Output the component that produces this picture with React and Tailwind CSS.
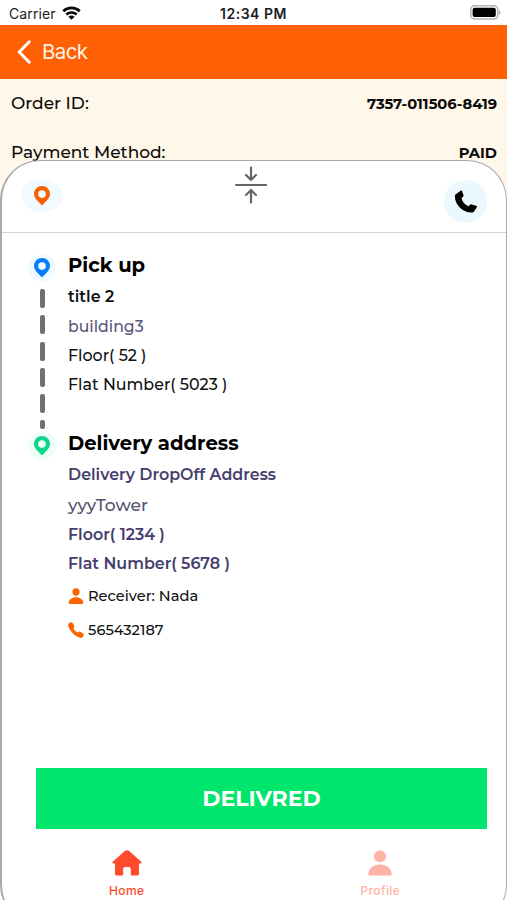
import React from "react";
import { IoCall, IoPerson } from "react-icons/io5";

function Pin({ className }) {
  return (
    <svg viewBox="0 0 16 20" className={`h-5 w-4 ${className}`} fill="currentColor">
      <path
        fillRule="evenodd"
        d="M8 0C3.5 0 0 3.4 0 7.8c0 3 1.700 5.300 3.600 7.300L8 19.600l4.400-4.500c1.900-2 3.600-4.300 3.600-7.300C16 3.400 12.500 0 8 0Zm0 4.300a3.800 3.800 0 1 1 0 7.600 3.800 3.800 0 0 1 0-7.600Z"
      />
    </svg>
  );
}

function StatusBar() {
  return (
    <div className="grid h-[25px] grid-cols-3 items-center bg-white pt-[2px] font-['Inter','Liberation_Sans',sans-serif] text-[14px] text-[#1c1c1e]">
      <div className="flex items-center gap-[6px] pl-[9px]">
        <span className="tracking-[0.1px]">Carrier</span>
        <svg viewBox="0 0 19 14" className="mb-[2px] h-[14px] w-[19px]" fill="none" stroke="#0b0b0b">
          <path d="M1.300 5.200a11.800 11.800 0 0 1 16.400 0" strokeWidth="2.800" />
          <path d="M4.300 8.500a7.500 7.500 0 0 1 10.400 0" strokeWidth="2.500" />
          <path d="M9.500 13.800 6.400 10.800a4.300 4.300 0 0 1 6.200 0Z" fill="#0b0b0b" stroke="none" />
        </svg>
      </div>
      <div className="text-center font-semibold tracking-[0.5px] whitespace-nowrap">12:34 PM</div>
      <div className="flex justify-end pr-[6px]">
        <svg viewBox="0 0 31 15" className="mb-[2px] h-[15px] w-[31px]">
          <rect x="0.8" y="0.8" width="27" height="13.2" rx="4" fill="#fff" stroke="#b5b5b5" strokeWidth="1.6" />
          <rect x="2.600" y="2.800" width="23.200" height="9.200" rx="2" fill="#000" />
          <path d="M29 5.200c1 .4 1.600 1.200 1.600 2.300S30 9.300 29 9.700Z" fill="#b5b5b5" />
        </svg>
      </div>
    </div>
  );
}

function CollapseIcon() {
  return (
    <svg
      viewBox="0 0 32 38"
      className="h-[38px] w-8"
      fill="none"
      stroke="#666"
      strokeWidth="2.200"
      strokeLinecap="round"
      strokeLinejoin="round"
    >
      <path d="M1.100 19h30M16 1.500v12M11 9l5 5 5-5M16 36.500v-12M11 29l5-5 5 5" />
    </svg>
  );
}

function Handset() {
  return (
    <svg viewBox="0 0 24 24" className="size-6" fill="#000">
      <path d="M6.600.8c.5-.4 1-.3 1.400.2l1.600 4.200c.2.600.1 1-.4 1.400L7.600 8.200c.8 3.700 3.500 6.700 7 8.100l1.500-1.600c.4-.4.9-.5 1.400-.3l4.900 1.400c.6.2.8.7.5 1.300l-2.600 4.200c-.4.700-1 1.100-1.800 1.200C9 23.300.5 14.600.9 6c0-.7.3-1.300.9-1.700Z" />
    </svg>
  );
}

const DASHES = ["h-[19px]", "h-[19px]", "h-[19px]", "h-[19px]", "h-[19px]", "h-[9px]"];

function Route() {
  return (
    <div className="flex w-[28px] flex-col items-center">
      <div className="flex size-7 items-center justify-center rounded-full bg-[#f0fbff]">
        <Pin className="text-[#0a7cff]" />
      </div>
      <div className="mt-[7px] flex flex-col items-center gap-[7.300px]">
        {DASHES.map((h, i) => (
          <span key={i} className={`${h} w-[5px] rounded-[2px] bg-[#707070]`} />
        ))}
      </div>
      <div className="mt-[3px] flex size-7 items-center justify-center rounded-full bg-[#effdf8]">
        <Pin className="text-[#0dd68b]" />
      </div>
    </div>
  );
}

export default function App() {
  return (
    <div className="h-[900px] w-[507px] overflow-hidden bg-white font-['Montserrat','Inter','Liberation_Sans',sans-serif] text-[#0a0a0a]">
      <StatusBar />
      <header className="flex h-[54px] items-center gap-[11px] bg-[#ff6003] pl-[17px] text-[#fff1e2]">
        <svg viewBox="0 0 14 24" className="h-6 w-[14px]" fill="none" stroke="#fff" strokeWidth="3">
          <path d="M12.300 1.800 2.200 12l10.100 10.200" strokeLinecap="round" strokeLinejoin="round" />
        </svg>
        <span className="pt-px font-['Inter','Liberation_Sans',sans-serif] text-[20.500px] tracking-[-0.600px]">Back</span>
      </header>
      <section className="h-[131px] bg-[#fff7e9] pr-[10px] pl-[11px] text-[17px] font-medium">
        <div className="flex h-[49px] items-center justify-between">
          <span>Order ID:</span>
          <span className="pt-px text-[14.700px] font-bold">7357-011506-8419</span>
        </div>
        <div className="flex h-[49px] items-center justify-between">
          <span>Payment Method:</span>
          <span className="pt-px text-[14.700px] font-bold">PAID</span>
        </div>
      </section>

      <main className="relative -mt-[50px] h-[765px] rounded-[40px] border border-l-2 border-[#a9a9a9] bg-white">
        <div className="flex h-[72px] justify-between border-b border-[#d3d3d3] pr-[19px] pl-[19px]">
          <div className="mt-[18px] flex h-[33px] w-[42px] items-center justify-center rounded-[50%] bg-[#f0faff]">
            <Pin className="text-[#f56200]" />
          </div>
          <div className="mt-[5px] -ml-[6px]">
            <CollapseIcon />
          </div>
          <div className="mt-[19px] flex size-[43px] items-center justify-center rounded-full bg-[#ebf9fe]">
            <Handset />
          </div>
        </div>

        <div className="flex h-[535px] gap-3 pt-[21px] pl-[26px]">
          <Route />
          <div className="flex flex-col items-start text-[15.900px] leading-[30px] font-medium whitespace-nowrap text-[#111]">
            <h2 className="mt-[-4px] h-[32px] text-[19.600px] font-bold text-black">Pick up</h2>
            <p className="h-[30px] font-semibold">title 2</p>
            <p className="h-[29px] text-[15.700px] text-[#5a567c]">building3</p>
            <p className="h-[29px]">Floor( 52 )</p>
            <p className="h-[58px]">Flat Number( 5023 )</p>
            <h2 className="h-[32px] text-[19.600px] font-bold text-black">Delivery address</h2>
            <p className="h-[30px] text-[15.900px] font-semibold text-[#45406b]">Delivery DropOff Address</p>
            <p className="h-[30px] text-[17.100px] text-[#55516f]">yyyTower</p>
            <p className="h-[29px] text-[15.900px] font-semibold text-[#45406b]">Floor( 1234 )</p>
            <p className="h-[32px] text-[15.900px] font-semibold text-[#45406b]">Flat Number( 5678 )</p>
            <p className="flex h-[34px] items-start gap-[3px] text-[14.600px]">
              <IoPerson className="mt-[6px] -ml-px size-[18px] text-[#fb6200]" />
              Receiver: Nada
            </p>
            <p className="flex items-start gap-[3px] text-[14.600px]">
              <IoCall className="mt-[6px] -ml-px size-[18px] text-[#fb6200]" />
              565432187
            </p>
          </div>
        </div>

        <button className="ml-[34px] flex h-[61px] w-[451px] items-center justify-center bg-[#00e56c] text-[22px] font-bold text-white">
          DELIVRED
        </button>
        <nav className="-ml-[2px] grid w-[507px] grid-cols-2 pt-[21px] font-['Inter','Liberation_Sans',sans-serif] text-[12px] font-medium tracking-[0.400px]">
          <div className="flex flex-col items-center text-[#ff4b2b]">
            <svg viewBox="0 0 30 27" className="h-[27px] w-[30px]" fill="currentColor">
              <path d="M12.800 1.100c1.400-1.200 3-1.200 4.400 0L29 11.400c1.100 1 .5 2-.7 2H27v10c0 1.400-.8 2.200-2.200 2.200h-4.300c-1.100 0-1.700-.6-1.700-1.700v-5c0-1.200-.7-1.900-1.900-1.900h-3.800c-1.200 0-1.900.7-1.900 1.900v5c0 1.100-.6 1.700-1.700 1.700H5.200C3.800 25.600 3 24.800 3 23.400v-10H1.700c-1.200 0-1.800-1-.7-2Z" />
            </svg>
            <span className="mt-[5px]">Home</span>
          </div>
          <div className="flex flex-col items-center text-[#ffb2a6]">
            <svg viewBox="0 0 24 27" className="h-[27px] w-6" fill="currentColor">
              <circle cx="12" cy="6.200" r="6" />
              <path d="M0.300 24.900c0-5.500 4.700-10.300 11.700-10.300s11.700 4.800 11.700 10.300c0 .4-.3.700-.7.700H1c-.4 0-.7-.3-.7-.7Z" />
            </svg>
            <span className="mt-[5px]">Profile</span>
          </div>
        </nav>
      </main>
    </div>
  );
}
